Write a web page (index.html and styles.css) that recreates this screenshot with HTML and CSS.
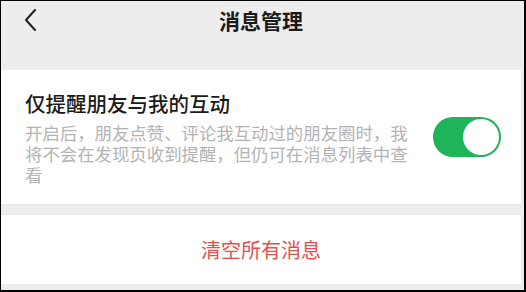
FILE: index.html
```html
<!DOCTYPE html>
<html lang="zh-CN">
<head>
<meta charset="utf-8">
<title>消息管理</title>
<link rel="stylesheet" href="styles.css">
</head>
<body>
<div class="frame">
  <header class="navbar">
    <span class="back">
      <svg width="14" height="22" viewBox="0 0 14 22"><polyline points="11,1 2,11 11,21" fill="none" stroke="#222" stroke-width="2" stroke-linecap="round" stroke-linejoin="round"/></svg>
    </span>
    <h1 class="title">消息管理</h1>
  </header>
  <section class="card setting">
    <div class="setting-text">
      <div class="setting-title">仅提醒朋友与我的互动</div>
      <div class="setting-desc">开启后，朋友点赞、评论我互动过的朋友圈时，我将不会在发现页收到提醒，但仍可在消息列表中查看</div>
    </div>
    <div class="switch on"><span class="knob"></span></div>
  </section>
  <div class="gap"></div>
  <section class="card action">
    <span class="danger">清空所有消息</span>
  </section>
</div>
</body>
</html>
```

FILE: styles.css
```css
html, body {
  margin: 0;
  padding: 0;
  background: #ffffff;
}
body {
  font-family: "Noto Sans CJK SC", "Noto Sans", sans-serif;
}
.frame {
  box-sizing: border-box;
  width: 526px;
  height: 292px;
  border-style: solid;
  border-color: #000;
  border-width: 1px 2px 2px 1px;
  background: #ededed;
  display: flex;
  flex-direction: column;
  overflow: hidden;
}
.navbar {
  position: relative;
  height: 69px;
  flex: none;
}
.back {
  position: absolute;
  left: 23px;
  top: 8px;
  display: flex;
}
.title {
  margin: 0;
  height: 38px;
  line-height: 38px;
  text-align: center;
  font-size: 21px;
  font-weight: 600;
  color: #1a1a1a;
  margin-right: 3px;
}
.card {
  background: #ffffff;
  margin-right: 3px;
}
.setting {
  display: flex;
  align-items: center;
  height: 134px;
  padding: 0 20px 0 24px;
  box-sizing: border-box;
}
.setting-text {
  width: 392px;
  flex: none;
}
.setting-title {
  font-size: 20.5px;
  line-height: 28px;
  color: #1a1a1a;
  font-weight: 500;
  margin-bottom: 5px;
}
.setting-desc {
  font-size: 17.4px;
  line-height: 21px;
  color: #b3b3b3;
}
.switch {
  margin-left: auto;
  width: 68px;
  height: 40px;
  border-radius: 20px;
  background: #1eb45a;
  display: flex;
  align-items: center;
  justify-content: flex-end;
  padding: 0 2px;
  box-sizing: border-box;
}
.knob {
  width: 36px;
  height: 36px;
  border-radius: 50%;
  background: #ffffff;
}
.gap {
  height: 11px;
  flex: none;
  border-top: 1px solid #e6e6e6;
  border-bottom: 1px solid #e8e8e8;
  box-sizing: border-box;
  margin-right: 3px;
}
.action {
  height: 69px;
  display: flex;
  align-items: center;
  justify-content: center;
}
.danger {
  font-size: 20px;
  color: #e5504f;
}
```
